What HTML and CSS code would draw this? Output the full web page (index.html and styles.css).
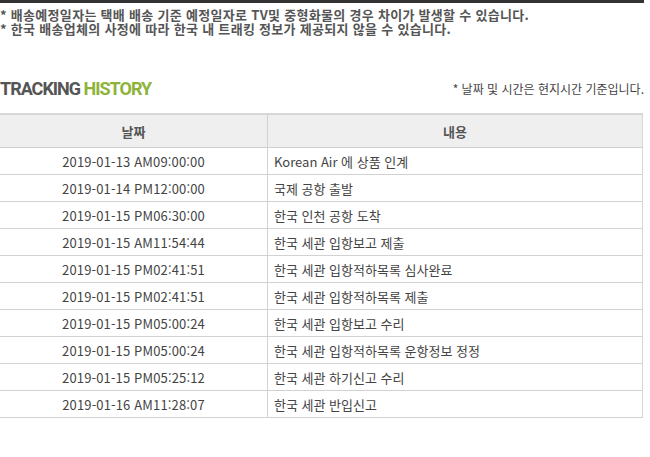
FILE: index.html
```html
<!DOCTYPE html>
<html lang="ko">
<head>
<meta charset="utf-8">
<link rel="stylesheet" href="styles.css">
</head>
<body>
<div class="page">
  <div class="notes">
    <p class="note">* 배송예정일자는 택배 배송 기준 예정일자로 TV및 중형화물의 경우 차이가 발생할 수 있습니다.</p>
    <p class="note">* 한국 배송업체의 사정에 따라 한국 내 트래킹 정보가 제공되지 않을 수 있습니다.</p>
  </div>
  <div class="head-row">
    <h2 class="title">TRACKING <span class="accent">HISTORY</span></h2>
    <p class="tz">* 날짜 및 시간은 현지시간 기준입니다.</p>
  </div>
  <table class="history">
    <thead>
      <tr><th class="c-date">날짜</th><th class="c-desc">내용</th></tr>
    </thead>
    <tbody>
      <tr><td class="c-date">2019-01-13 AM09:00:00</td><td class="c-desc">Korean Air 에 상품 인계</td></tr>
      <tr><td class="c-date">2019-01-14 PM12:00:00</td><td class="c-desc">국제 공항 출발</td></tr>
      <tr><td class="c-date">2019-01-15 PM06:30:00</td><td class="c-desc">한국 인천 공항 도착</td></tr>
      <tr><td class="c-date">2019-01-15 AM11:54:44</td><td class="c-desc">한국 세관 입항보고 제출</td></tr>
      <tr><td class="c-date">2019-01-15 PM02:41:51</td><td class="c-desc">한국 세관 입항적하목록 심사완료</td></tr>
      <tr><td class="c-date">2019-01-15 PM02:41:51</td><td class="c-desc">한국 세관 입항적하목록 제출</td></tr>
      <tr><td class="c-date">2019-01-15 PM05:00:24</td><td class="c-desc">한국 세관 입항보고 수리</td></tr>
      <tr><td class="c-date">2019-01-15 PM05:00:24</td><td class="c-desc">한국 세관 입항적하목록 운항정보 정정</td></tr>
      <tr><td class="c-date">2019-01-15 PM05:25:12</td><td class="c-desc">한국 세관 하기신고 수리</td></tr>
      <tr><td class="c-date">2019-01-16 AM11:28:07</td><td class="c-desc">한국 세관 반입신고</td></tr>
    </tbody>
  </table>
</div>
</body>
</html>
```

FILE: styles.css
```css
html, body {
  margin: 0;
  padding: 0;
  background: #fff;
}
body {
  font-family: "Noto Sans CJK KR", "DejaVu Sans", sans-serif;
  font-size: 12px;
  color: #444;
}
.page {
  width: 644px;
  border-top: 3px solid #333;
}
.notes {
  padding-top: 5px;
}
.note {
  margin: 0;
  font-size: 13px;
  letter-spacing: 0.3px;
  font-weight: bold;
  line-height: 14px;
  color: #555;
  white-space: nowrap;
}
.head-row {
  display: flex;
  justify-content: space-between;
  align-items: center;
  margin-top: 42px;
  height: 22px;
}
.title {
  margin: 0;
  font-family: "Liberation Sans Narrow", "Roboto", "Liberation Sans", sans-serif;
  font-size: 18px;
  font-weight: bold;
  letter-spacing: -1px;
  color: #555;
  line-height: 22px;
  white-space: nowrap;
}
.accent {
  color: #8db33b;
}
.tz {
  margin: 0;
  font-size: 12px;
  color: #444;
  line-height: 14px;
}
.history {
  margin-top: 13px;
  width: 643px;
  border-collapse: collapse;
  table-layout: fixed;
  border-top: 2px solid #d6d6d6;
  border-right: 1px solid #d6d6d6;
}
.history th {
  background: #efefef;
  height: 32px;
  padding: 0;
  font-size: 13px;
  font-weight: bold;
  color: #555;
  text-align: center;
  border-bottom: 1px solid #cfcfcf;
}
.history td {
  height: 26px;
  padding: 0;
  font-size: 13px;
  color: #444;
  border-bottom: 1px solid #d2d2d2;
}
.c-date {
  width: 267px;
  text-align: center;
  border-right: 1px solid #d2d2d2;
}
td.c-date {
  letter-spacing: 0.15px;
}
td.c-desc {
  padding-left: 6px;
  text-align: left;
}
```
